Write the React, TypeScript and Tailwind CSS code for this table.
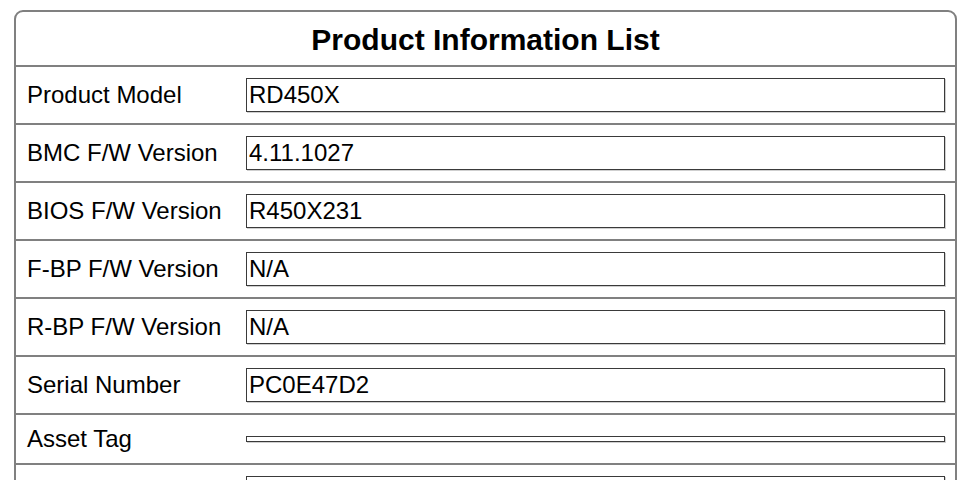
import React from 'react';

const rows: { label: string; value: string }[] = [
  { label: 'Product Model', value: 'RD450X' },
  { label: 'BMC F/W Version', value: '4.11.1027' },
  { label: 'BIOS F/W Version', value: 'R450X231' },
  { label: 'F-BP F/W Version', value: 'N/A' },
  { label: 'R-BP F/W Version', value: 'N/A' },
  { label: 'Serial Number', value: 'PC0E47D2' },
  { label: 'Asset Tag', value: '' },
  { label: 'Manufacture Date', value: '2016/03/21' },
];

export default function App() {
  return (
    <div className="min-h-screen bg-white pt-[10px] pl-[14px] pr-[13px] font-['Liberation_Sans',Arial,sans-serif] text-black">
      <div className="border-2 border-[#808080] rounded-[9px] overflow-hidden">
        <div className="h-[55px] pt-[2px] flex items-center justify-center text-[30px] font-bold border-b-2 border-[#808080]">
          Product Information List
        </div>
        {rows.map((r, i) => (
          <div
            key={r.label}
            className={`flex items-center pt-[11px] pb-[11px] ${i < rows.length - 1 ? 'border-b-2 border-[#808080]' : ''}`}
          >
            <div className="w-[230px] shrink-0 pl-[11px] text-[24px] leading-[26px]">{r.label}</div>
            <div className="flex-1 mr-[10px] border border-[#3a3a3a] shadow-[1px_1px_0_#cfcfcf] px-[2px] py-[2px] text-[24px] leading-[28px]">
              {r.value}
            </div>
          </div>
        ))}
      </div>
    </div>
  );
}
